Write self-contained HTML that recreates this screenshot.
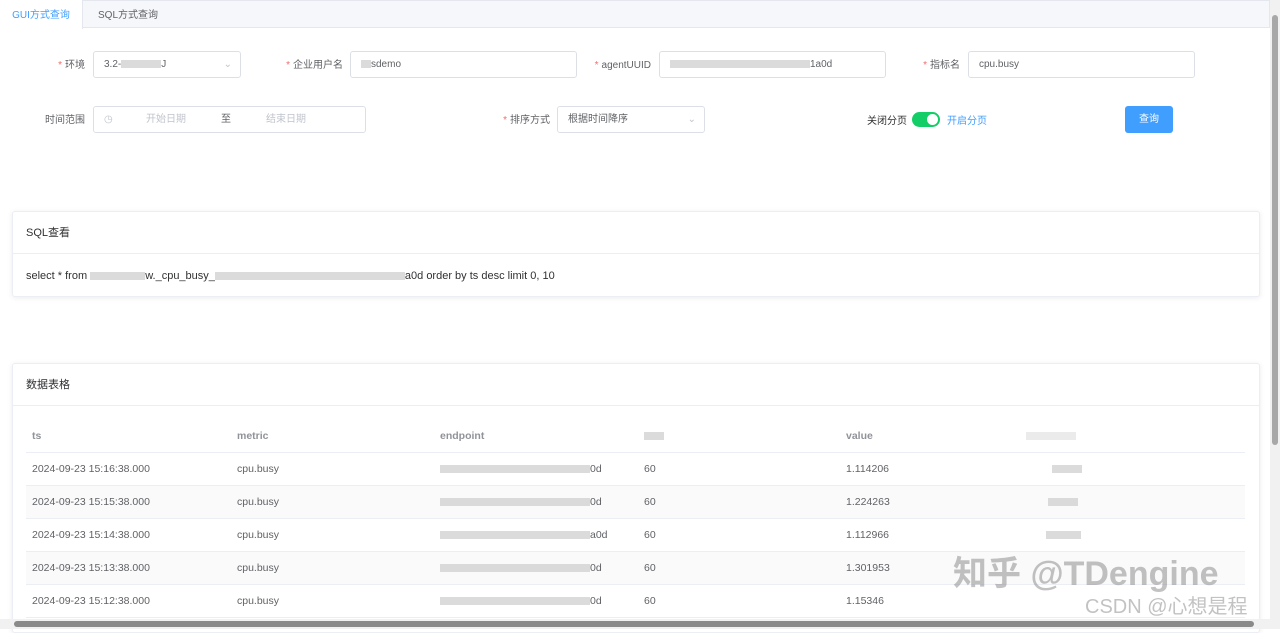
<!DOCTYPE html>
<html><head><meta charset="utf-8"><style>
*{box-sizing:border-box;margin:0;padding:0}
body{width:1280px;height:629px;overflow:hidden;background:#fff;font-family:"Liberation Sans","Noto Sans CJK SC",sans-serif;font-size:11px;color:#606266;position:relative}
.abs{position:absolute}
.tabs{left:0;top:0;width:1270px;height:28px;background:#f5f7fa;border:1px solid #e4e7ed}
.tab{top:3px;height:28px;line-height:28px;font-size:10px}
.lbl{font-size:10px;color:#606266;text-align:right;line-height:14px;height:14px}
.lbl b{color:#f56c6c;font-weight:normal;margin-right:3px}
.inp{height:27px;border:1px solid #dcdfe6;border-radius:3px;background:#fff;font-size:10px;line-height:26px;padding-left:10px;color:#606266}
.blur{display:inline-block;height:8px;background:#ccc;vertical-align:middle;opacity:.7}
.card{border:1px solid #ebeef5;border-radius:3px;box-shadow:0 1px 6px rgba(0,0,0,.08);background:#fff}
.row{left:26px;width:1219px;height:33px;border-bottom:1px solid #ebeef5;font-size:10.5px;line-height:33px}
.row span{position:absolute;top:0}
</style></head><body>
<div class="abs tabs"></div>
<div class="abs tab" style="left:0;top:0;width:83px;background:#fff;border-right:1px solid #e4e7ed;height:29px;line-height:32px;color:#409eff;text-align:center">GUI方式查询</div>
<div class="abs tab" style="left:98px;color:#606266;top:1px;line-height:30px">SQL方式查询</div>

<div class="abs lbl" style="left:40px;top:59px;width:45px"><b>*</b>环境</div>
<div class="abs inp" style="left:93px;top:51px;width:148px">3.2-<span class="blur" style="width:40px"></span>J<span style="position:absolute;right:8px;color:#c0c4cc">⌄</span></div>
<div class="abs lbl" style="left:270px;top:59px;width:73px"><b>*</b>企业用户名</div>
<div class="abs inp" style="left:350px;top:51px;width:227px"><span class="blur" style="width:10px"></span>sdemo</div>
<div class="abs lbl" style="left:580px;top:59px;width:71px"><b>*</b>agentUUID</div>
<div class="abs inp" style="left:659px;top:51px;width:227px"><span class="blur" style="width:140px"></span>1a0d</div>
<div class="abs lbl" style="left:910px;top:59px;width:50px"><b>*</b>指标名</div>
<div class="abs inp" style="left:968px;top:51px;width:227px">cpu.busy</div>

<div class="abs lbl" style="left:40px;top:114px;width:45px">时间范围</div>
<div class="abs inp" style="left:93px;top:106px;width:273px;color:#c0c4cc"><span>◷</span><span style="position:absolute;left:52px">开始日期</span><span style="position:absolute;left:127px;color:#606266">至</span><span style="position:absolute;left:172px">结束日期</span></div>
<div class="abs lbl" style="left:490px;top:114px;width:60px"><b>*</b>排序方式</div>
<div class="abs inp" style="left:557px;top:106px;width:148px">根据时间降序<span style="position:absolute;right:8px;color:#c0c4cc">⌄</span></div>
<div class="abs lbl" style="left:867px;top:115px;color:#303133;text-align:left">关闭分页</div>
<div class="abs" style="left:912px;top:112px;width:28px;height:15px;border-radius:8px;background:#13ce66"><div style="position:absolute;right:2px;top:2px;width:11px;height:11px;border-radius:50%;background:#fff"></div></div>
<div class="abs lbl" style="left:947px;top:115px;color:#409eff;text-align:left">开启分页</div>
<div class="abs" style="left:1125px;top:106px;width:48px;height:27px;border-radius:3px;background:#409eff;color:#fff;font-size:10px;text-align:center;line-height:28px">查询</div>

<div class="abs card" style="left:12px;top:211px;width:1248px;height:86px">
<div style="height:42px;border-bottom:1px solid #ebeef5;padding:14px 13px;font-size:11px;line-height:14px;color:#303133">SQL查看</div>
<div style="padding:16px 13px;font-size:11px;color:#303133">select * from <span class="blur" style="width:55px"></span>w._cpu_busy_<span class="blur" style="width:190px"></span>a0d order by ts desc limit 0, 10</div>
</div>

<div class="abs card" style="left:12px;top:363px;width:1248px;height:270px">
<div style="height:42px;border-bottom:1px solid #ebeef5;padding:14px 13px;font-size:11px;line-height:14px;color:#303133">数据表格</div>
</div>
<div class="abs row" style="top:420px;color:#909399;font-weight:bold"><span style="left:6px">ts</span><span style="left:211px">metric</span><span style="left:414px">endpoint</span><span style="left:618px"><i class="blur" style="width:20px"></i></span><span style="left:820px">value</span><span style="left:1000px"><i class="blur" style="width:50px;opacity:.4"></i></span></div>
<div class="abs row" style="top:453px"><span style="left:6px">2024-09-23 15:16:38.000</span><span style="left:211px">cpu.busy</span><span style="left:414px"><i class="blur" style="width:150px"></i>0d</span><span style="left:618px">60</span><span style="left:820px">1.114206</span><span style="left:1026px"><i class="blur" style="width:30px"></i></span></div>
<div class="abs row" style="top:486px;background:#fafafa"><span style="left:6px">2024-09-23 15:15:38.000</span><span style="left:211px">cpu.busy</span><span style="left:414px"><i class="blur" style="width:150px"></i>0d</span><span style="left:618px">60</span><span style="left:820px">1.224263</span><span style="left:1022px"><i class="blur" style="width:30px"></i></span></div>
<div class="abs row" style="top:519px"><span style="left:6px">2024-09-23 15:14:38.000</span><span style="left:211px">cpu.busy</span><span style="left:414px"><i class="blur" style="width:150px"></i>a0d</span><span style="left:618px">60</span><span style="left:820px">1.112966</span><span style="left:1020px"><i class="blur" style="width:35px"></i></span></div>
<div class="abs row" style="top:552px;background:#fafafa"><span style="left:6px">2024-09-23 15:13:38.000</span><span style="left:211px">cpu.busy</span><span style="left:414px"><i class="blur" style="width:150px"></i>0d</span><span style="left:618px">60</span><span style="left:820px">1.301953</span></div>
<div class="abs row" style="top:585px"><span style="left:6px">2024-09-23 15:12:38.000</span><span style="left:211px">cpu.busy</span><span style="left:414px"><i class="blur" style="width:150px"></i>0d</span><span style="left:618px">60</span><span style="left:820px">1.15346</span></div>

<div class="abs" style="left:953px;top:552px;font-size:34px;line-height:44px;color:rgba(120,120,120,.45);font-weight:bold;white-space:nowrap">知乎 @TDengine</div>
<div class="abs" style="left:1085px;top:594px;font-size:20px;line-height:26px;color:rgba(120,120,120,.45);white-space:nowrap">CSDN @心想是程</div>

<div class="abs" style="left:1270px;top:0;width:10px;height:629px;background:#f1f1f1"></div>
<div class="abs" style="left:1272px;top:15px;width:6px;height:430px;border-radius:3px;background:#a8a8a8"></div>
<div class="abs" style="left:0;top:619px;width:1270px;height:10px;background:#f1f1f1"></div>
<div class="abs" style="left:14px;top:621px;width:1240px;height:6px;border-radius:3px;background:#8a8a8a"></div>
</body></html>
